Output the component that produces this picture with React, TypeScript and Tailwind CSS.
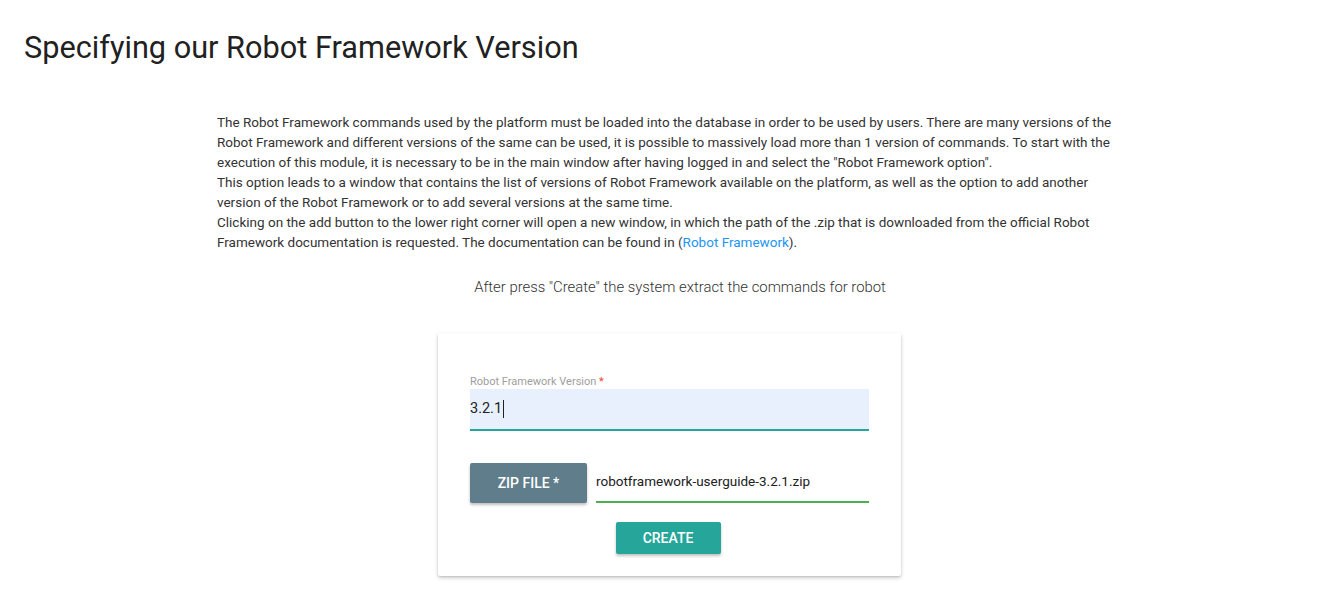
export default function App() {
  return (
    <div className="min-h-screen bg-white font-['Roboto',sans-serif] text-[#212121]">
      <h1 className="pl-6 pt-[28px] text-[30.7px] leading-[40px] font-normal text-[#212121]">
        Specifying our Robot Framework Version
      </h1>

      <div className="ml-[217px] mt-[44px] w-[905px]">
        <p className="text-[13.5px] leading-[20px] text-[#333]">
          The Robot Framework commands used by the platform must be loaded into the database in order to be used by users. There are many versions of the Robot Framework and different versions of the same can be used, it is possible to massively load more than 1 version of commands. To start with the execution of this module, it is necessary to be in the main window after having logged in and select the "Robot Framework option".
          <br />
          This option leads to a window that contains the list of versions of Robot Framework available on the platform, as well as the option to add another version of the Robot Framework or to add several versions at the same time.
          <br />
          Clicking on the add button to the lower right corner will open a new window, in which the path of the .zip that is downloaded from the official Robot Framework documentation is requested. The documentation can be found in (<span className="text-[#2196f3]">Robot Framework</span>).
        </p>

        <p className="mt-[25px] pl-[21px] text-center text-[14.85px] leading-[20px] font-light text-[#333]">
          After press "Create" the system extract the commands for robot
        </p>

        <div className="mx-auto mt-[36px] w-[463px] rounded-[2px] bg-white px-8 pt-[41px] pb-[22px] shadow-[0_2px_4px_rgba(0,0,0,0.18),0_1px_2px_rgba(0,0,0,0.12)]">
          <label className="block text-[11px] leading-[15px] text-[#9e9e9e]">
            Robot Framework Version <span className="text-[#f44336]">*</span>
          </label>
          <div className="flex h-[42px] items-center border-b-2 border-[#26a69a] bg-[#e8f0fe] text-[14.5px] text-[#212121]">
            3.2.1<span className="ml-[1px] inline-block h-[18px] w-px bg-[#212121]"></span>
          </div>

          <div className="mt-[31px] flex items-end gap-[9px]">
            <div className="flex h-[40px] w-[117px] items-center justify-center rounded-[2px] bg-[#607d8b] text-[14px] font-medium text-white shadow-[0_2px_3px_rgba(0,0,0,0.25)]">
              ZIP FILE *
            </div>
            <div className="flex h-[41px] flex-1 items-center border-b-2 border-[#4caf50] text-[13.5px] text-[#212121]">
              robotframework-userguide-3.2.1.zip
            </div>
          </div>

          <div className="mt-[19px] flex justify-center">
            <div className="ml-[-3px] flex h-[32px] w-[105px] items-center justify-center rounded-[2px] bg-[#26a69a] text-[14px] font-medium text-white shadow-[0_2px_3px_rgba(0,0,0,0.25)]">
              CREATE
            </div>
          </div>
        </div>
      </div>
    </div>
  )
}
